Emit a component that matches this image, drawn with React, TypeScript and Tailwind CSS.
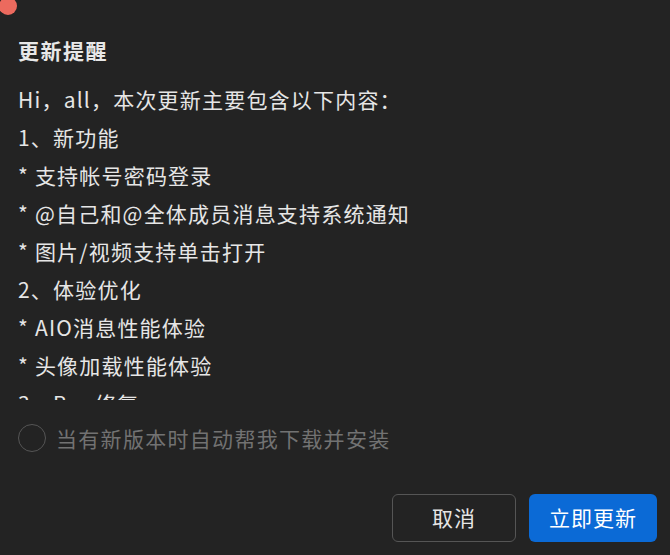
import React from "react";

const lines = [
  "Hi，all，本次更新主要包含以下内容：",
  "1、新功能",
  "* 支持帐号密码登录",
  "* @自己和@全体成员消息支持系统通知",
  "* 图片/视频支持单击打开",
  "2、体验优化",
  "* AIO消息性能体验",
  "* 头像加载性能体验",
  "3、Bug修复",
  "* 修复部分已知问题",
];

export default function App() {
  return (
    <div
      className="relative w-[670px] h-[555px] bg-[#232323] overflow-hidden flex flex-col"
      style={{ fontFamily: '"Noto Sans CJK SC", "Noto Sans", sans-serif' }}
    >
      <div className="absolute left-[-1px] top-[-3px] w-[18px] h-[18px] rounded-full bg-[#ec6a5e]" />
      <div className="pl-[18px] pt-[35px] h-[80px] text-[21px] tracking-[1.5px] leading-[30px] font-bold text-[#e8e8e8]">
        更新提醒
      </div>
      <div className="pl-[18px] h-[320px] overflow-hidden text-[#e6e6e6] text-[21px] tracking-[1.2px] leading-[38px]">
        {lines.map((l, i) => (
          <div key={i} className="whitespace-nowrap">
            {l}
          </div>
        ))}
      </div>
      <div className="pl-[18px] mt-[23px] flex items-center gap-[10px] h-[30px]">
        <div className="w-[28px] h-[28px] shrink-0 rounded-full border-[1.5px] border-[#555555]" />
        <span className="text-[21px] tracking-[1.3px] leading-[30px] whitespace-nowrap text-[#727272]">
          当有新版本时自动帮我下载并安装
        </span>
      </div>
      <div className="mt-auto pb-[13px] pr-[13px] flex justify-end gap-[13px]">
        <button className="w-[124px] h-[48px] rounded-[6px] border border-[#555555] bg-[#232323] text-[21px] tracking-[1px] text-[#e6e6e6]">
          取消
        </button>
        <button className="w-[128px] h-[48px] rounded-[6px] bg-[#0b6ad6] text-[21px] tracking-[1px] text-white">
          立即更新
        </button>
      </div>
    </div>
  );
}
